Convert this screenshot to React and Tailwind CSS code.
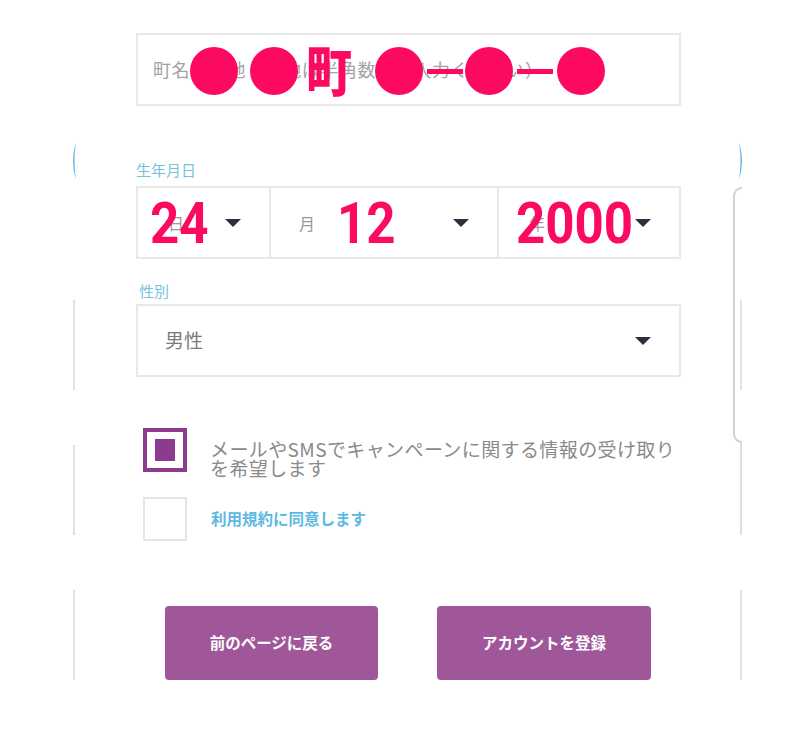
const PINK = "bg-[#fc0a62]";

function Caret({ className = "" }) {
  return (
    <svg width="16" height="8" viewBox="0 0 16 8" className={className}>
      <path d="M0 0 H16 L8 8 Z" fill="#2b313b" />
    </svg>
  );
}

function Checkbox({ checked }) {
  if (checked) {
    return (
      <div className="w-[44px] h-[44px] shrink-0 border-[4px] border-[#8d3b8c] flex items-center justify-center">
        <div className="w-[20px] h-[22px] bg-[#8d3b8c]" />
      </div>
    );
  }
  return <div className="w-[44px] h-[44px] shrink-0 border-2 border-[#e6e6e6]" />;
}

function Crescent({ flip, className }) {
  return (
    <svg width="6" height="38" viewBox="0 0 6 38" className={className}>
      <path
        d={flip ? "M1 0 Q7 19 1 38 Q4 19 1 0 Z" : "M5 0 Q-1 19 5 38 Q2 19 5 0 Z"}
        fill="#5ab6df"
      />
    </svg>
  );
}

function Decorations() {
  return (
    <>
      {/* blue arcs peeking from the layer behind */}
      <Crescent className="absolute left-[71px] top-[142px]" />
      <Crescent flip className="absolute left-[738px] top-[142px]" />

      {/* left grey brackets */}
      <div className="absolute left-[73px] top-[300px] w-[3px] h-[90px] border-l-2 border-y border-[#e2e2e2]" />
      <div className="absolute left-[73px] top-[445px] w-[3px] h-[90px] border-l-2 border-y border-[#e2e2e2]" />
      <div className="absolute left-[73px] top-[590px] w-[3px] h-[90px] border-l-2 border-y border-[#e2e2e2]" />

      {/* right side */}
      <div className="absolute left-[733px] top-[187px] w-[9px] h-[256px] rounded-l-[9px] border-l-2 border-y-2 border-[#d2d2d2]" />
      <div className="absolute left-[740px] top-[300px] w-[2px] h-[90px] bg-[#e4e4e4]" />
      <div className="absolute left-[740px] top-[443px] w-[2px] h-[92px] bg-[#dedede]" />
      <div className="absolute left-[740px] top-[590px] w-[2px] h-[90px] bg-[#e2e2e2]" />
    </>
  );
}

function Annotations() {
  const digit =
    "absolute font-['Roboto',sans-serif] font-bold text-[58px] leading-none text-[#fc0a62] scale-x-[0.88] origin-left";
  return (
    <>
      <div className={`absolute left-[190px] top-[47px] w-[48px] h-[48px] rounded-full ${PINK}`} />
      <div className={`absolute left-[250px] top-[47px] w-[48px] h-[48px] rounded-full ${PINK}`} />
      <span className="absolute left-[306px] top-[42px] text-[54px] leading-none font-black text-[#fc0a62] scale-x-[0.85] origin-left">
        町
      </span>
      <div className={`absolute left-[375px] top-[47px] w-[48px] h-[48px] rounded-full ${PINK}`} />
      <div className={`absolute left-[427px] top-[69px] w-[36px] h-[5px] ${PINK}`} />
      <div className={`absolute left-[465px] top-[47px] w-[48px] h-[48px] rounded-full ${PINK}`} />
      <div className={`absolute left-[517px] top-[69px] w-[36px] h-[5px] ${PINK}`} />
      <div className={`absolute left-[557px] top-[47px] w-[48px] h-[48px] rounded-full ${PINK}`} />

      <span className={`${digit} left-[150px] top-[194px]`}>24</span>
      <span className={`${digit} left-[337px] top-[194px]`}>12</span>
      <span className={`${digit} left-[516px] top-[194px]`}>2000</span>
    </>
  );
}

export default function App() {
  return (
    <div className="relative w-[800px] h-[731px] bg-white overflow-hidden font-['Noto_Sans_CJK_JP',sans-serif]">
      <Decorations />

      <div className="relative ml-[136px] w-[545px] pt-[33px] flex flex-col">
        {/* address */}
        <div className="h-[73px] border-2 border-[#e8e8e8] flex items-center pl-[15px]">
          <span className="text-[18px] tracking-[0.6px] text-[#a3a3a3]">
            町名・番地（番地は半角数字で入力ください）
          </span>
        </div>

        {/* birthday */}
        <div className="mt-[54px] h-[20px] text-[15px] leading-[20px] text-[#74c3dc]">生年月日</div>
        <div className="mt-[6px] h-[73px] border-2 border-[#e8e8e8] flex">
          <div className="w-[133px] flex items-center pl-[30px] pr-[28px] justify-between border-r-2 border-[#e8e8e8]">
            <span className="text-[16px] text-[#9a9a9a]">日</span>
            <Caret />
          </div>
          <div className="w-[228px] flex items-center pl-[28px] pr-[28px] justify-between border-r-2 border-[#e8e8e8]">
            <span className="text-[16px] text-[#9a9a9a]">月</span>
            <Caret />
          </div>
          <div className="flex-1 flex items-center pl-[30px] pr-[28px] justify-between">
            <span className="text-[16px] text-[#9a9a9a]">年</span>
            <Caret />
          </div>
        </div>

        {/* gender */}
        <div className="mt-[22px] h-[20px] pl-[3px] text-[15px] leading-[20px] text-[#74c3dc]">性別</div>
        <div className="mt-[3px] h-[73px] border-2 border-[#e8e8e8] flex items-center justify-between pl-[27px] pr-[28px]">
          <span className="text-[19px] text-[#7a7a7a]">男性</span>
          <Caret />
        </div>

        {/* consents */}
        <div className="mt-[51px] h-[44px] pl-[7px] flex gap-[23px]">
          <Checkbox checked />
          <p className="mt-[11px] w-[480px] text-[19px] leading-[19px] tracking-[0.4px] text-[#8a8a8a]">
            メールやSMSでキャンペーンに関する情報の受け取りを希望します
          </p>
        </div>
        <div className="mt-[25px] pl-[7px] flex items-center gap-[24px]">
          <Checkbox />
          <span className="text-[15.5px] font-bold text-[#5cb9e0]">利用規約に同意します</span>
        </div>

        {/* actions */}
        <div className="mt-[65px] pl-[29px] flex gap-[59px]">
          <button className="w-[213px] h-[74px] rounded-[4px] bg-[#a0579a] text-white text-[15.5px] font-bold">
            前のページに戻る
          </button>
          <button className="w-[214px] h-[74px] rounded-[4px] bg-[#a0579a] text-white text-[15.5px] font-bold">
            アカウントを登録
          </button>
        </div>
      </div>

      <Annotations />
    </div>
  );
}
